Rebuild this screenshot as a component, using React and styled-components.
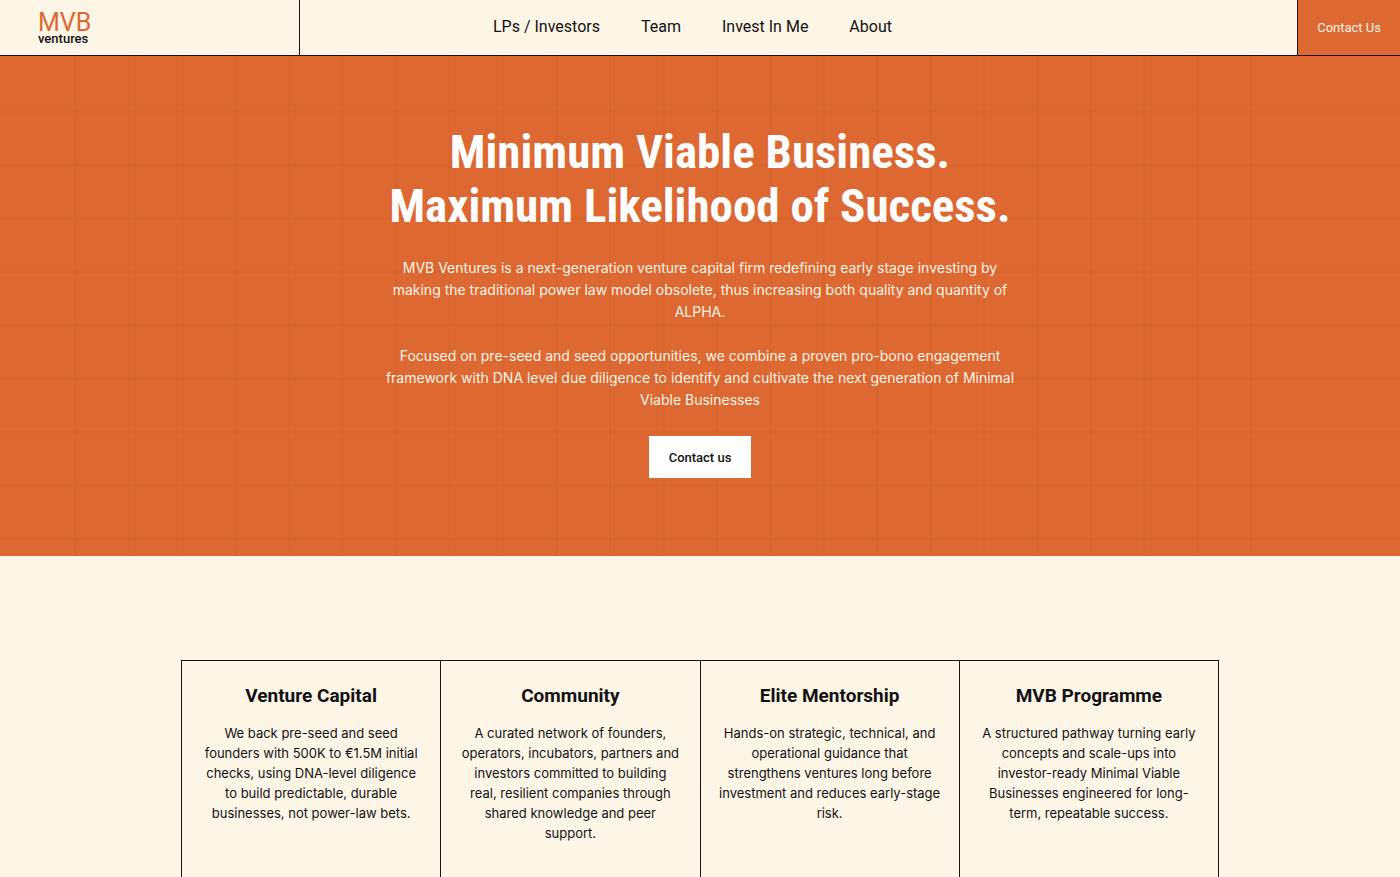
import React from 'react'
import styled, { createGlobalStyle } from 'styled-components'

const display = '"Roboto Condensed", "Roboto", "Liberation Sans", sans-serif'
const heading = '"Roboto", "Liberation Sans", sans-serif'

const GlobalStyle = createGlobalStyle`
  * {
    box-sizing: border-box;
    margin: 0;
    padding: 0;
  }

  body {
    background-color: #fdf5e6;
    color: #121212;
    font-family: "Inter", "Liberation Sans", sans-serif;
  }

  a {
    color: inherit;
    text-decoration: none;
  }
`

const Header = styled.header`
  display: flex;
  height: 56px;
  border-bottom: 1px solid #1c1410;
`

const LogoCell = styled.div`
  width: 300px;
  padding: 12px 38px;
  border-right: 1px solid #1c1410;
`

const Logo = styled.a`
  display: inline-flex;
  flex-direction: column;
  font-family: ${heading};
`

const LogoName = styled.span`
  color: #dd6831;
  font-size: 25px;
  line-height: 21px;
`

const LogoSub = styled.span`
  color: #121212;
  font-size: 13px;
  font-weight: 500;
  line-height: 11px;
`

const Nav = styled.nav`
  flex: 1;
  display: flex;
  align-items: center;
  gap: 41px;
  padding: 0 0 3px 193px;
  font-family: ${heading};
  font-size: 16px;
`

const HeaderButton = styled.button`
  padding: 0 19px;
  border: none;
  border-left: 1px solid #1c1410;
  background-color: #dd6831;
  color: #fdf5e6;
  font-family: ${heading};
  font-size: 13px;
  cursor: pointer;
`

const Hero = styled.section`
  position: relative;
  background-color: #dd6831;
  color: #fff;
  text-align: center;
`

const GridLines = styled.svg`
  position: absolute;
  inset: 0;
  width: 100%;
  height: 100%;
`

const HeroContent = styled.div`
  position: relative;
  display: flex;
  flex-direction: column;
  align-items: center;
  max-width: 664px;
  margin: 0 auto;
  padding: 69px 16px 78px;
`

const Title = styled.h1`
  margin-bottom: 2px;
  font-family: ${display};
  font-size: 47px;
  font-weight: 700;
  line-height: 54px;
`

const Text = styled.p`
  max-width: 632px;
  margin-top: 22px;
  color: #fdf5e6;
  font-size: 14px;
  line-height: 22px;
`

const HeroButton = styled.button`
  margin-top: 25px;
  padding: 0 20px;
  height: 42px;
  border: none;
  background-color: #fff;
  color: #121212;
  font-family: ${heading};
  font-size: 13px;
  font-weight: 500;
  cursor: pointer;
`

const Services = styled.section`
  padding: 104px 181px 0;
`

const Cards = styled.div`
  display: grid;
  grid-template-columns: repeat(4, 1fr);
  border: 1px solid #1c1410;
  border-right: none;
`

const Card = styled.article`
  min-height: 260px;
  padding: 22px 18px;
  border-right: 1px solid #1c1410;
  text-align: center;
`

const CardTitle = styled.h2`
  font-family: ${heading};
  font-size: 19px;
  font-weight: 700;
  line-height: 26px;
`

const CardText = styled.p`
  margin-top: 14px;
  font-size: 13px;
  line-height: 20px;
`

const links = ['LPs / Investors', 'Team', 'Invest In Me', 'About']

const cards = [
  {
    title: 'Venture Capital',
    text: 'We back pre-seed and seed founders with 500K to €1.5M initial checks, using DNA-level diligence to build predictable, durable businesses, not power-law bets.',
  },
  {
    title: 'Community',
    text: 'A curated network of founders, operators, incubators, partners and investors committed to building real, resilient companies through shared knowledge and peer support.',
  },
  {
    title: 'Elite Mentorship',
    text: 'Hands-on strategic, technical, and operational guidance that strengthens ventures long before investment and reduces early-stage risk.',
  },
  {
    title: 'MVB Programme',
    text: 'A structured pathway turning early concepts and scale-ups into investor-ready Minimal Viable Businesses engineered for long-term, repeatable success.',
  },
]

const columns = Array.from({ length: 23 }, (_, i) => 75.5 + i * 53.45)
const rows = Array.from({ length: 9 }, (_, i) => 55.5 + i * 53.45)

function App() {
  return (
    <div>
      <GlobalStyle />
      <Header>
        <LogoCell>
          <Logo href="#">
            <LogoName>MVB</LogoName>
            <LogoSub>ventures</LogoSub>
          </Logo>
        </LogoCell>
        <Nav>
          {links.map((link) => (
            <a key={link} href="#">{link}</a>
          ))}
        </Nav>
        <HeaderButton>Contact Us</HeaderButton>
      </Header>
      <Hero>
        <GridLines viewBox="0 0 1400 500" preserveAspectRatio="xMidYMin slice" aria-hidden="true">
          <g stroke="#c95a28" strokeOpacity="0.25" strokeWidth="2">
            {columns.map((x) => <line key={x} x1={x} x2={x} y1="0" y2="500" />)}
            {rows.map((y) => <line key={y} x1="0" x2="1400" y1={y} y2={y} />)}
          </g>
        </GridLines>
        <HeroContent>
          <Title>
            Minimum Viable Business.
            <br />
            Maximum Likelihood of Success.
          </Title>
          <Text>
            MVB Ventures is a next-generation venture capital firm redefining early stage
            investing by making the traditional power law model obsolete, thus increasing both
            quality and quantity of ALPHA.
          </Text>
          <Text>
            Focused on pre-seed and seed opportunities, we combine a proven pro-bono engagement
            framework with DNA level due diligence to identify and cultivate the next generation
            of Minimal Viable Businesses
          </Text>
          <HeroButton>Contact us</HeroButton>
        </HeroContent>
      </Hero>
      <Services>
        <Cards>
          {cards.map((card) => (
            <Card key={card.title}>
              <CardTitle>{card.title}</CardTitle>
              <CardText>{card.text}</CardText>
            </Card>
          ))}
        </Cards>
      </Services>
    </div>
  )
}

export default App
